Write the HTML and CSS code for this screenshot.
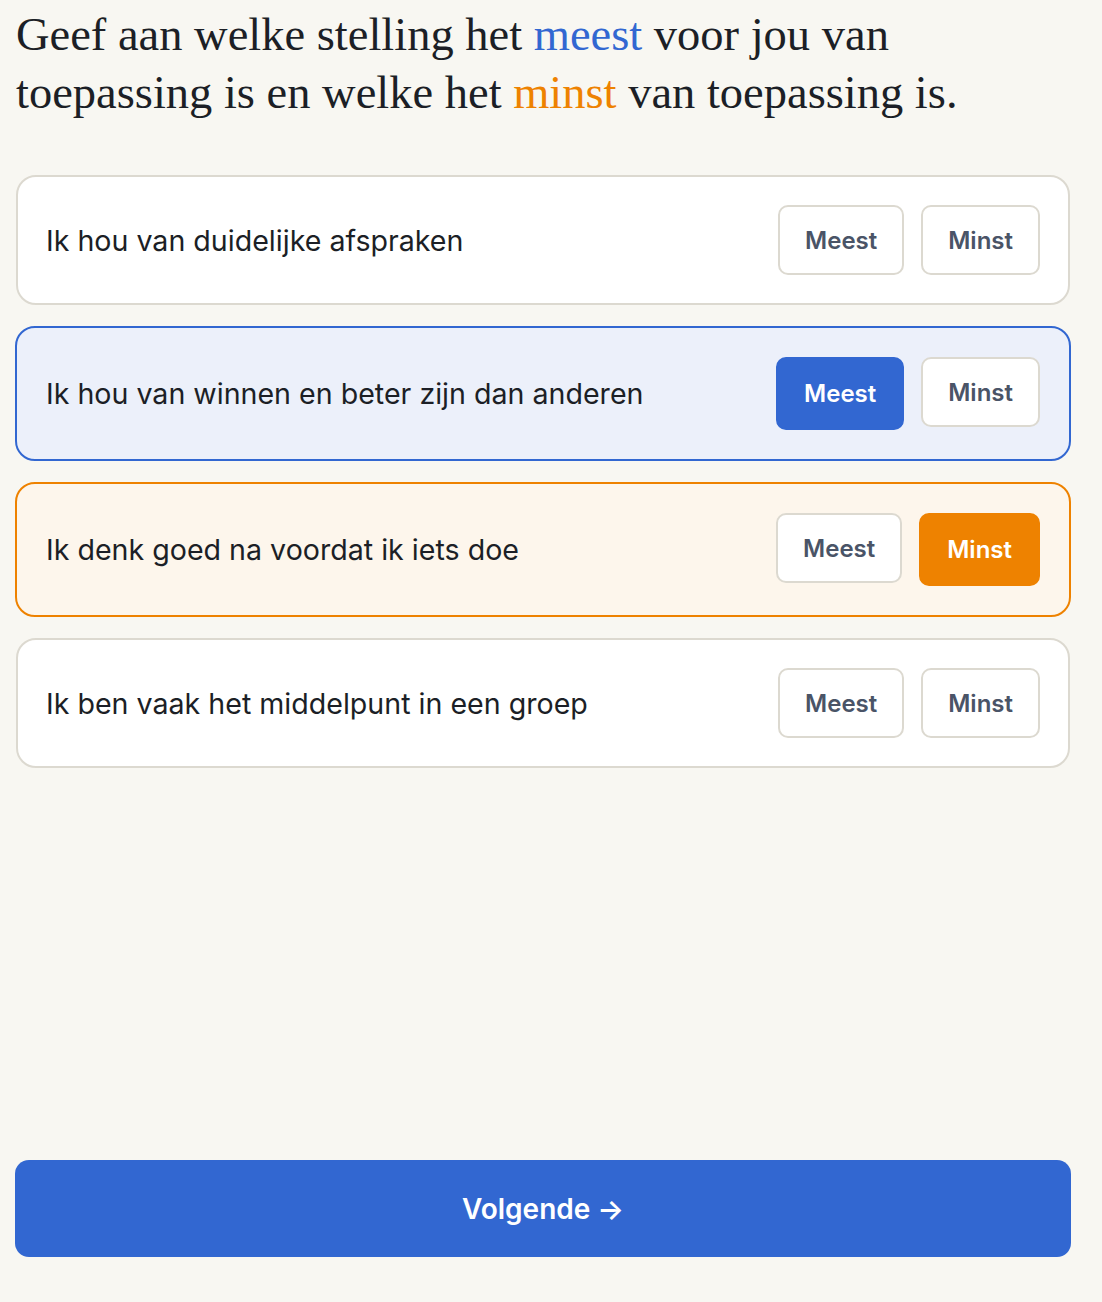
FILE: index.html
```html
<!DOCTYPE html>
<html lang="nl">

<head>
    <meta charset="UTF-8">
    <meta name="viewport" content="width=device-width, initial-scale=1.0">
    <title>Stellingen</title>
    <link rel="stylesheet" href="styles.css">
</head>

<body>
    <div class="page">
        <!-- Vraag -->
        <h1 class="question">
            Geef aan welke stelling het <span class="word-most">meest</span> voor jou van
            toepassing is en welke het <span class="word-least">minst</span> van toepassing is.
        </h1>

        <!-- Stellingen -->
        <div class="statements">
            <div class="statement">
                <p>Ik hou van duidelijke afspraken</p>
                <div class="choices">
                    <button class="choice">Meest</button>
                    <button class="choice">Minst</button>
                </div>
            </div>

            <div class="statement is-most">
                <p>Ik hou van winnen en beter zijn dan anderen</p>
                <div class="choices">
                    <button class="choice choice-most">Meest</button>
                    <button class="choice">Minst</button>
                </div>
            </div>

            <div class="statement is-least">
                <p>Ik denk goed na voordat ik iets doe</p>
                <div class="choices">
                    <button class="choice">Meest</button>
                    <button class="choice choice-least">Minst</button>
                </div>
            </div>

            <div class="statement">
                <p>Ik ben vaak het middelpunt in een groep</p>
                <div class="choices">
                    <button class="choice">Meest</button>
                    <button class="choice">Minst</button>
                </div>
            </div>
        </div>

        <button class="next">Volgende &rarr;</button>
    </div>
</body>

</html>
```

FILE: styles.css
```css
/* Reset & variabelen */
* {
    margin: 0;
    padding: 0;
    box-sizing: border-box;
}

:root {
    --bg: #f8f7f2;
    --blue: #3267d1;
    --orange: #ee8200;
    --line: #dcd9d0;
    --text: #1c1f26;
    --muted: #4a5467;
}

body {
    background: var(--bg);
    font-family: 'Inter', 'Noto Sans', sans-serif;
    color: var(--text);
}

.page {
    display: flex;
    flex-direction: column;
    min-height: 100vh;
    padding: 6px 31px 45px 15px;
}

/* Vraag */
.question {
    font-family: 'Liberation Serif', serif;
    font-weight: 400;
    font-size: 46.5px;
    line-height: 58px;
    padding-left: 1px;
    margin-bottom: 53px;
}

.word-most {
    color: var(--blue);
}

.word-least {
    color: var(--orange);
}

/* Stellingen */
.statements {
    display: flex;
    flex-direction: column;
    gap: 21px;
}

.statement {
    display: flex;
    align-items: center;
    justify-content: space-between;
    background: #fff;
    border: 2px solid var(--line);
    border-radius: 20px;
    padding: 28px;
    margin: 0 1px;
}

.statement p {
    font-size: 28.6px;
}

.statement.is-most {
    background: #ecf0fa;
    border-color: var(--blue);
    padding: 29px;
    margin: 0;
}

.statement.is-least {
    background: #fdf6ec;
    border-color: var(--orange);
    padding: 29px;
    margin: 0;
}

.choices {
    display: flex;
    gap: 17px;
}

.choice {
    font-family: 'Inter', 'Noto Sans', sans-serif;
    font-size: 24px;
    font-weight: 600;
    color: var(--muted);
    background: #fff;
    border: 2px solid var(--line);
    border-radius: 10px;
    height: 70px;
    padding: 0 25px;
    cursor: pointer;
}

.choice-most,
.choice-least {
    color: #fff;
    height: 73px;
    padding: 0 26px;
}

.choice-most {
    background: var(--blue);
    border-color: var(--blue);
}

.choice-least {
    background: var(--orange);
    border-color: var(--orange);
}

/* Volgende */
.next {
    margin-top: auto;
    height: 97px;
    background: var(--blue);
    color: #fff;
    border: none;
    border-radius: 14px;
    font-family: 'Inter', 'Noto Sans', sans-serif;
    font-size: 28px;
    font-weight: 600;
    cursor: pointer;
}
```
